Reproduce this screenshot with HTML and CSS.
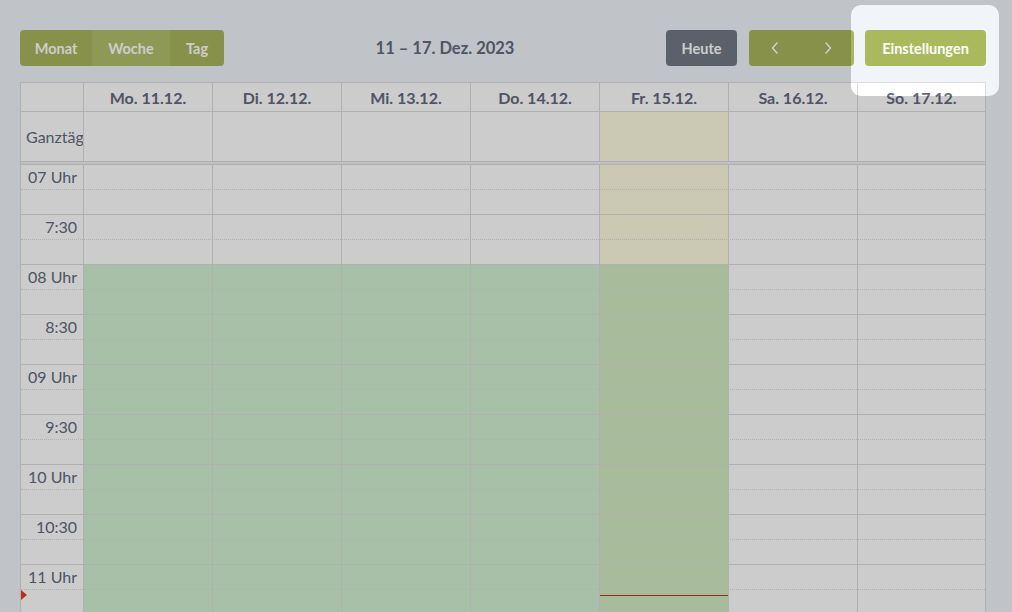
FILE: index.html
```html
<!DOCTYPE html>
<html lang="de">
<head>
<meta charset="utf-8">
<title>Kalender</title>
<link rel="stylesheet" href="styles.css">
</head>
<body>
<div class="page">
  <div class="toolbar">
    <div class="btn-group">
      <button class="btn view-month">Monat</button><button class="btn view-week active">Woche</button><button class="btn view-day">Tag</button>
    </div>
    <h2 class="title">11 – 17. Dez. 2023</h2>
    <div class="tools-right">
      <button class="btn dark">Heute</button>
      <div class="btn-group">
        <button class="btn nav" aria-label="zurück"><svg width="10" height="14" viewBox="0 0 10 14"><polyline points="7,2 2.5,7 7,12" fill="none" stroke="currentColor" stroke-width="1.6" stroke-linecap="round" stroke-linejoin="round"/></svg></button><button class="btn nav next" aria-label="weiter"><svg width="10" height="14" viewBox="0 0 10 14"><polyline points="3,2 7.5,7 3,12" fill="none" stroke="currentColor" stroke-width="1.6" stroke-linecap="round" stroke-linejoin="round"/></svg></button>
      </div>
      <button class="btn primary">Einstellungen</button>
    </div>
  </div>

  <div class="cal">
    <div class="row head">
      <div class="axis"></div>
      <div class="cell">Mo. 11.12.</div>
      <div class="cell">Di. 12.12.</div>
      <div class="cell">Mi. 13.12.</div>
      <div class="cell">Do. 14.12.</div>
      <div class="cell">Fr. 15.12.</div>
      <div class="cell">Sa. 16.12.</div>
      <div class="cell">So. 17.12.</div>
    </div>
    <div class="row allday">
      <div class="axis">Ganztägig</div>
      <div class="cell"></div>
      <div class="cell"></div>
      <div class="cell"></div>
      <div class="cell"></div>
      <div class="cell today"></div>
      <div class="cell"></div>
      <div class="cell"></div>
    </div>
    <div class="divider"></div>
    <div class="tgrid">
      <div class="cols">
        <div class="col-axis"></div>
        <div class="col busy"></div>
        <div class="col busy"></div>
        <div class="col busy"></div>
        <div class="col busy"></div>
        <div class="col busy today"></div>
        <div class="col"></div>
        <div class="col"></div>
      </div>
      <div class="slots">
        <div class="slot"><span class="label">07 Uhr</span></div>
        <div class="slot minor"><span class="label"></span></div>
        <div class="slot"><span class="label">7:30</span></div>
        <div class="slot minor"><span class="label"></span></div>
        <div class="slot"><span class="label">08 Uhr</span></div>
        <div class="slot minor"><span class="label"></span></div>
        <div class="slot"><span class="label">8:30</span></div>
        <div class="slot minor"><span class="label"></span></div>
        <div class="slot"><span class="label">09 Uhr</span></div>
        <div class="slot minor"><span class="label"></span></div>
        <div class="slot"><span class="label">9:30</span></div>
        <div class="slot minor"><span class="label"></span></div>
        <div class="slot"><span class="label">10 Uhr</span></div>
        <div class="slot minor"><span class="label"></span></div>
        <div class="slot"><span class="label">10:30</span></div>
        <div class="slot minor"><span class="label"></span></div>
        <div class="slot"><span class="label">11 Uhr</span></div>
        <div class="slot minor"><span class="label"></span></div>
      </div>
      <span class="now-arrow"></span>
      <span class="now-line"></span>
    </div>
  </div>

  <div class="spotlight"></div>
</div>
</body>
</html>
```

FILE: styles.css
```css
* { box-sizing: border-box; }

html, body {
  margin: 0;
  height: 100%;
  overflow: hidden;
}

body {
  background: #f1f4f9;
  font-family: Lato, "Noto Sans", sans-serif;
  color: #636a80;
}

.page {
  padding: 30px 26px 0 20px;
}

/* Toolbar */
.toolbar {
  display: flex;
  justify-content: space-between;
  align-items: center;
  height: 36px;
  margin-bottom: 16px;
}

.title {
  margin: 0;
  font-size: 16.5px;
  font-weight: 700;
  color: #636a80;
}

.tools-right {
  display: flex;
  gap: 12px;
}

.btn-group {
  display: flex;
  border-radius: 4px;
  overflow: hidden;
}

.btn {
  height: 36px;
  padding: 0;
  border: 0;
  border-radius: 0;
  background: #a9b65d;
  color: #ffffff;
  font-family: inherit;
  font-size: 14.5px;
  font-weight: 700;
  display: flex;
  align-items: center;
  justify-content: center;
}

.view-month { width: 72px; }
.view-week { width: 78px; }
.view-day { width: 54px; }

.btn.active {
  background: #b2c06b;
}

.btn.dark {
  background: #717a86;
  border-radius: 4px;
  width: 71px;
}

.btn.nav {
  width: 52px;
}

.btn.nav.next {
  width: 53px;
}

.btn.primary {
  background: #aab95c;
  border-radius: 4px;
  width: 121px;
  margin-left: -1px;
}

/* Calendar */
.cal {
  width: 966px;
  border: 1px solid #dddddd;
  border-bottom: 0;
  background: #ffffff;
}

.row {
  display: grid;
  grid-template-columns: 62px repeat(6, 129px) 128px;
}

.row .cell {
  border-left: 1px solid #dddddd;
}

.head {
  height: 28px;
}

.head .cell {
  display: flex;
  align-items: center;
  justify-content: center;
  font-size: 16px;
  font-weight: 700;
  color: #636a80;
}

.allday {
  height: 50px;
  border-top: 1px solid #dddddd;
}

.allday .axis {
  display: flex;
  align-items: center;
  padding-left: 5px;
  font-size: 16px;
  white-space: nowrap;
  overflow: hidden;
}

.today {
  background: #fefae2;
}

.divider {
  height: 3px;
  border-top: 1px solid #dddddd;
  background: #efefef;
}

.tgrid {
  position: relative;
  display: grid;
  border-top: 1px solid #dddddd;
}

.cols,
.slots {
  grid-area: 1 / 1;
}

.cols {
  display: grid;
  grid-template-columns: 62px repeat(6, 129px) 128px;
}

.col {
  border-left: 1px solid #dddddd;
}

.col.busy {
  background: linear-gradient(to bottom, transparent 100px, #d2efd3 100px);
}

.col.busy.today {
  background: linear-gradient(to bottom, #fefae2 100px, #d2eac1 100px);
}

.slots {
  display: flex;
  flex-direction: column;
}

.slot {
  height: 25px;
  display: flex;
}

.slot + .slot {
  border-top: 1px solid #dddddd;
}

.slot:first-child {
  height: 24px;
}

.slot.minor {
  border-top-style: dotted;
}

.label {
  width: 62px;
  padding: 0 6px 0 0;
  text-align: right;
  font-size: 16px;
  line-height: 24px;
  color: #636a80;
}

.now-line {
  position: absolute;
  left: 579px;
  width: 128px;
  top: 430px;
  height: 1px;
  background: #c8301c;
}

.now-arrow {
  position: absolute;
  left: 0;
  top: 425px;
  width: 0;
  height: 0;
  border-style: solid;
  border-width: 5px 0 5px 6px;
  border-color: transparent transparent transparent #f03a1a;
}

/* Onboarding spotlight */
.spotlight {
  position: absolute;
  left: 851px;
  top: 5px;
  width: 148px;
  height: 91px;
  border-radius: 10px;
  box-shadow: 0 0 0 3000px rgba(0, 0, 0, 0.2);
  pointer-events: none;
  z-index: 10;
}
```
